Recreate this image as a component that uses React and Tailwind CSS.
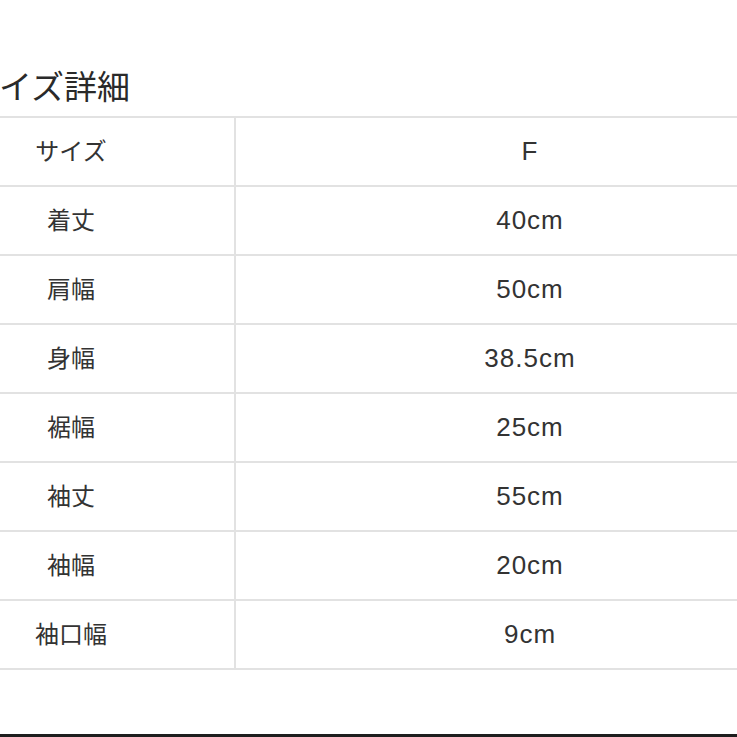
const rows = [
  ["サイズ", "F"],
  ["着丈", "40cm"],
  ["肩幅", "50cm"],
  ["身幅", "38.5cm"],
  ["裾幅", "25cm"],
  ["袖丈", "55cm"],
  ["袖幅", "20cm"],
  ["袖口幅", "9cm"],
];

export default function App() {
  return (
    <div
      className="relative w-[737px] h-[737px] overflow-hidden bg-white text-[#333]"
      style={{ fontFamily: '"Liberation Sans", "Noto Sans CJK JP", sans-serif' }}
    >
      <div className="flex flex-col h-full">
        {/* title, cut at the left edge like the screenshot */}
        <h2 className="ml-[-34px] mt-[71px] h-[34px] text-[33px] leading-[34px] whitespace-nowrap text-[#2a2a2a]">
          サイズ詳細
        </h2>

        {/* size table */}
        <div className="ml-[-92px] mt-[11px] w-[916px] border-t-2 border-[#e2e2e2]">
          {rows.map(([label, value]) => (
            <div key={label} className="flex h-[69px] border-b-2 border-[#e2e2e2]">
              <div className="w-[328px] shrink-0 flex items-center justify-center border-r-2 border-[#e2e2e2] text-[24px] text-[#333]">
                {label}
              </div>
              <div className="flex-1 flex items-center justify-center text-[26px] tracking-[1px] text-[#333]">
                {value}
              </div>
            </div>
          ))}
        </div>

        <div className="flex-1" />
        <div className="h-[3px] bg-[#1e1e1e]" />
      </div>
    </div>
  );
}
